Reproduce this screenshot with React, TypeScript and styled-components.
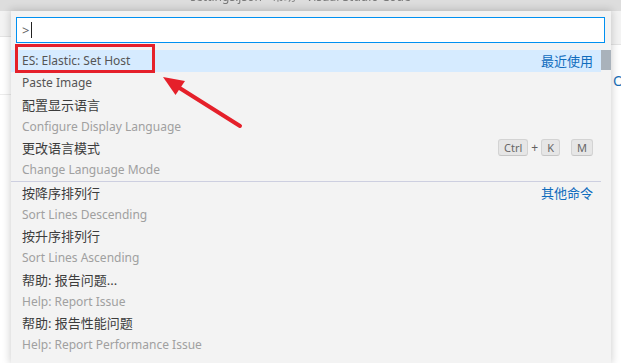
import styled, { createGlobalStyle } from "styled-components";

const GlobalStyle = createGlobalStyle`
  html, body {
    margin: 0;
    padding: 0;
    background: #ffffff;
    overflow: hidden;
  }
  * {
    box-sizing: border-box;
  }
`;

const FONT = `"Noto Sans", "Noto Sans CJK SC", sans-serif`;

const Window = styled.div`
  position: relative;
  width: 621px;
  height: 363px;
  overflow: hidden;
  font-family: ${FONT};
  background: #ffffff;
`;

const TitleBar = styled.div`
  height: 11px;
  background: #dddddd;
  overflow: hidden;
  text-align: center;
  color: #7a7a7a;
  font-size: 12px;
  line-height: 12px;
  filter: blur(0.6px);
`;

const TitleText = styled.div`
  margin-top: -9px;
  padding-right: 20px;
`;

const Workbench = styled.div`
  display: grid;
  grid-template-columns: 11px 600px 10px;
  height: 352px;
`;

const Gutter = styled.div<{ $bar: number }>`
  display: flex;
  flex-direction: column;
  background: #ffffff;
  & > div:first-child {
    height: ${(p) => p.$bar}px;
    background: #f3f3f3;
    border-bottom: 1px solid #e4e4e4;
  }
`;

const GutterBar = styled.div``;

const GutterLine = styled.div`
  margin-top: 57px;
  border-top: 1px solid #ececec;
`;

const GutterGlyph = styled.div`
  margin-top: 28px;
  padding-left: 2px;
  color: #1a6fb8;
  font-size: 14px;
  line-height: 16px;
`;

const Panel = styled.div`
  position: relative;
  z-index: 1;
  background: #f3f3f3;
  box-shadow: 0 0 8px 1px rgba(0, 0, 0, 0.18);
  padding-top: 6px;
  display: flex;
  flex-direction: column;
`;

const InputBox = styled.div`
  margin: 0 6px 0 5px;
  height: 26px;
  background: #ffffff;
  border: 1px solid #0090f1;
  display: flex;
  align-items: center;
  padding-left: 5px;
  color: #616161;
  font-size: 13px;
`;

const Caret = styled.span`
  display: inline-block;
  width: 1px;
  height: 16px;
  margin-left: 2px;
  background: #222222;
`;

const List = styled.div`
  position: relative;
  margin-top: 7px;
  padding-right: 10px;
`;

const Scrollbar = styled.div`
  position: absolute;
  top: 0;
  right: 0;
  width: 10px;
  height: 20px;
  background: #a9b2bb;
`;

const Item = styled.div<{ $active?: boolean; $border?: boolean }>`
  display: flex;
  flex-direction: column;
  background: ${(p) => (p.$active ? "#d6ebff" : "transparent")};
  border-top: ${(p) => (p.$border ? "1px solid #cdcfe0" : "none")};
`;

const Line = styled.div`
  height: 21.75px;
  display: flex;
  align-items: center;
  padding: 0 8px 0 11px;
  font-size: 12px;
  white-space: nowrap;
`;

const Label = styled.span<{ $cjk?: boolean }>`
  flex: 1;
  font-size: ${(p) => (p.$cjk ? 13 : 12)}px;
  color: ${(p) => (p.$cjk ? "#3c3c3c" : "#555555")};
`;

const Detail = styled.span`
  color: #a0a0a0;
`;

const Badge = styled.span`
  color: #0f6cbd;
  font-size: 13px;
`;

const Keys = styled.span`
  display: flex;
  align-items: center;
  gap: 11px;
`;

const Chord = styled.span`
  display: flex;
  align-items: center;
  gap: 3px;
`;

const Key = styled.span`
  display: inline-flex;
  align-items: center;
  justify-content: center;
  min-width: 18px;
  height: 17px;
  padding: 0 5px;
  background: #e6e6e6;
  border: 1px solid #d3d3d3;
  border-bottom-color: #c6c6c6;
  border-radius: 3px;
  color: #666666;
  font-size: 11px;
`;

const Plus = styled.span`
  color: #616161;
  font-size: 12px;
`;

const Highlight = styled.div`
  position: absolute;
  left: 15px;
  top: 44px;
  width: 140px;
  height: 29px;
  border: 3px solid #e5202a;
  z-index: 3;
`;

const Arrow = styled.svg`
  position: absolute;
  left: 0;
  top: 0;
  z-index: 3;
  pointer-events: none;
`;

type Row = {
  label: string;
  detail?: string;
  badge?: string;
  keys?: string[][];
  active?: boolean;
  border?: boolean;
};

const rows: Row[] = [
  { label: "ES: Elastic: Set Host", badge: "最近使用", active: true },
  { label: "Paste Image" },
  { label: "配置显示语言", detail: "Configure Display Language" },
  {
    label: "更改语言模式",
    detail: "Change Language Mode",
    keys: [["Ctrl", "K"], ["M"]],
  },
  {
    label: "按降序排列行",
    detail: "Sort Lines Descending",
    badge: "其他命令",
    border: true,
  },
  { label: "按升序排列行", detail: "Sort Lines Ascending" },
  { label: "帮助: 报告问题...", detail: "Help: Report Issue" },
  { label: "帮助: 报告性能问题", detail: "Help: Report Performance Issue" },
];

const isCjk = (s: string) => /[\u4e00-\u9fff]/.test(s);

const CommandRow = ({ row }: { row: Row }) => (
  <Item $active={row.active} $border={row.border}>
    <Line>
      <Label $cjk={isCjk(row.label)}>{row.label}</Label>
      {row.badge && <Badge>{row.badge}</Badge>}
      {row.keys && (
        <Keys>
          {row.keys.map((chord, i) => (
            <Chord key={i}>
              {chord.map((k, j) => (
                <Chord key={k}>
                  {j > 0 && <Plus>+</Plus>}
                  <Key>{k}</Key>
                </Chord>
              ))}
            </Chord>
          ))}
        </Keys>
      )}
    </Line>
    {row.detail && (
      <Line>
        <Detail>{row.detail}</Detail>
      </Line>
    )}
  </Item>
);

export default function App() {
  return (
    <>
      <GlobalStyle />
      <Window>
        <TitleBar>
          <TitleText>settings.json - 帮助 - Visual Studio Code</TitleText>
        </TitleBar>
        <Workbench>
          <Gutter $bar={26}>
            <GutterBar />
            <GutterLine />
          </Gutter>
          <Panel>
            <InputBox>
              &gt;
              <Caret />
            </InputBox>
            <List>
              <Scrollbar />
              {rows.map((row) => (
                <CommandRow key={row.label} row={row} />
              ))}
            </List>
          </Panel>
          <Gutter $bar={34}>
            <GutterBar />
            <GutterGlyph>O</GutterGlyph>
          </Gutter>
        </Workbench>
        <Highlight />
        <Arrow width="621" height="363" viewBox="0 0 621 363">
          <line
            x1="240"
            y1="126"
            x2="178"
            y2="87"
            stroke="#e5202a"
            strokeWidth="4"
            strokeLinecap="round"
          />
          <polygon points="163,77 185,81 175.5,95" fill="#e5202a" />
        </Arrow>
      </Window>
    </>
  );
}
